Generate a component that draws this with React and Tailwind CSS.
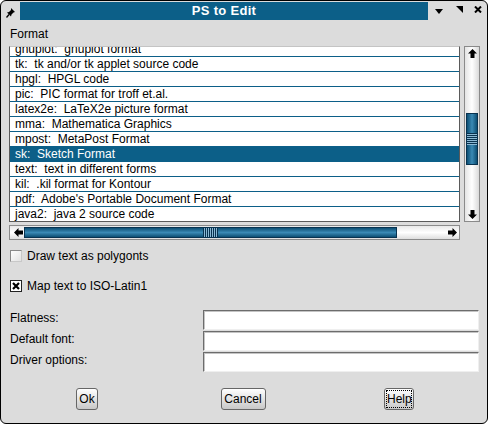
import React from 'react'

const ROWS = [
  'gnuplot:  gnuplot format',
  'tk:  tk and/or tk applet source code',
  'hpgl:  HPGL code',
  'pic:  PIC format for troff et.al.',
  'latex2e:  LaTeX2e picture format',
  'mma:  Mathematica Graphics',
  'mpost:  MetaPost Format',
  'sk:  Sketch Format',
  'text:  text in different forms',
  'kil:  .kil format for Kontour',
  "pdf:  Adobe's Portable Document Format",
  'java2:  java 2 source code',
]
const SELECTED = 7

// solid black scroll arrow, drawn pointing up and rotated
function Arrow({ rot = 0 }) {
  return (
    <svg width="9" height="9" viewBox="0 0 9 9" style={{ transform: `rotate(${rot}deg)` }}>
      <path d="M4.5 0 L9 4.5 L6.5 4.5 L6.5 9 L2.5 9 L2.5 4.5 L0 4.5 Z" fill="#000" />
    </svg>
  )
}

function Pin() {
  return (
    <svg width="10" height="11" viewBox="0 0 10 11">
      <path d="M5 1 L9 5 L7.5 5.5 L5.5 7.5 L5 9.5 L1 5.5 L3 5 L5 3 Z" fill="#000" />
      <path d="M3 7.5 L0.5 10.5" stroke="#000" strokeWidth="1.3" />
    </svg>
  )
}

function Checkbox({ checked, label }) {
  return (
    <div className="flex items-center h-[14px] pl-[9px]">
      {checked ? (
        <div className="w-[12px] h-[12px] border border-[#222] bg-white flex items-center justify-center">
          <svg width="8" height="8" viewBox="0 0 8 8">
            <path d="M1 1 L7 7 M7 1 L1 7" stroke="#000" strokeWidth="2.2" />
          </svg>
        </div>
      ) : (
        <div className="w-[12px] h-[12px] border border-[#8a8a8a] border-r-[#c8c8c8] border-b-[#c8c8c8] bg-linear-to-br from-white to-[#e2e2e2]" />
      )}
      <span className="ml-[5px] leading-[14px]">{label}</span>
    </div>
  )
}

function Field({ label }) {
  return (
    <div className="flex items-start h-[20px] pl-[9px]">
      <span className="w-[193px] leading-[14px] pt-[1px]">{label}</span>
      <div className="w-[276px] h-[20px] bg-white border border-t-[#6c6c6c] border-l-[#6c6c6c] border-r-[#efefef] border-b-[#efefef] shadow-[inset_1px_1px_0_#c4c4c4]" />
    </div>
  )
}

export default function App() {
  return (
    <div className="w-[488px] h-[424px] bg-white">
      <div className="w-[488px] h-[424px] bg-[#dcdcdc] border border-black rounded-[6px] overflow-hidden flex flex-col text-[12px] text-black font-['Liberation_Sans',Arial,sans-serif]">
        {/* title bar */}
        <div className="h-[20px] pt-[1px] flex">
          <div className="w-[19px] flex items-center justify-center pt-[1px]">
            <Pin />
          </div>
          <div className="w-[408px] h-[18px] bg-[#0c5f88] flex items-center justify-center text-white font-bold text-[13px] tracking-[0.3px]">
            PS to Edit
          </div>
          <div className="flex-1 flex items-center h-[18px]">
            <svg className="ml-[7px]" width="8" height="5" viewBox="0 0 8 5">
              <path d="M0 0 L8 0 L4 5 Z" fill="#000" />
            </svg>
            <svg className="ml-[13px] -mt-[3px]" width="7" height="7" viewBox="0 0 7 7">
              <path d="M0 0 L7 0 L7 7 Z" fill="#000" />
            </svg>
            <svg className="ml-[11px] -mt-[3px]" width="8" height="7" viewBox="0 0 8 7">
              <path d="M1 0.5 L7 6.5 M7 0.5 L1 6.5" stroke="#000" strokeWidth="2" />
            </svg>
          </div>
        </div>

        <div className="mt-[6px] pl-[9px] leading-[14px]">Format</div>

        {/* list + vertical scrollbar */}
        <div className="mt-[5px] ml-[8px] flex">
          <div className="w-[451px] h-[176px] bg-white border border-t-[#c4c4c4] border-l-[#5a5a5a] border-r-[#5a5a5a] border-b-[#5a5a5a] overflow-hidden">
            <div className="-mt-[5px]">
              {ROWS.map((r, i) => (
                <div
                  key={r}
                  className={
                    i === SELECTED
                      ? 'h-[15px] border-b border-[#0c5f88] bg-[#0c5f88] text-white pl-[5px] leading-[14px] whitespace-pre'
                      : 'h-[15px] border-b border-[#0c5f88] pl-[5px] leading-[14px] whitespace-pre'
                  }
                >
                  {r}
                </div>
              ))}
            </div>
          </div>
          <div className="ml-[4px] w-[16px] h-[176px] border border-[#8a8a8a] bg-linear-to-r from-[#e4e4e4] via-white to-[#dadada] flex flex-col items-center">
            <div className="mt-[2px]"><Arrow /></div>
            <div className="mt-[55px] w-[12px] h-[52px] border border-[#08324f] bg-linear-to-r from-[#0b4f74] via-[#3a8ab5] to-[#0b4f74] flex items-center">
              <div className="w-full h-[12px] bg-[repeating-linear-gradient(to_bottom,#08324f_0,#08324f_1px,#8ab8d4_1px,#8ab8d4_2px)]" />
            </div>
            <div className="mt-auto mb-[2px]"><Arrow rot={180} /></div>
          </div>
        </div>

        {/* horizontal scrollbar */}
        <div className="mt-[3px] ml-[8px] w-[451px] h-[15px] border border-[#8a8a8a] bg-linear-to-b from-[#e8e8e8] via-white to-[#dedede] flex items-center">
          <div className="ml-[4px]"><Arrow rot={-90} /></div>
          <div className="ml-[1px] w-[373px] h-[11px] border border-[#08324f] bg-linear-to-b from-[#0b4f74] via-[#3a8ab5] to-[#0b4f74] flex justify-center">
            <div className="w-[15px] h-full bg-[repeating-linear-gradient(to_right,#08324f_0,#08324f_1px,#8ab8d4_1px,#8ab8d4_2px)]" />
          </div>
          <div className="ml-auto mr-[2px]"><Arrow rot={90} /></div>
        </div>

        <div className="mt-[9px]">
          <Checkbox label="Draw text as polygonts" />
        </div>
        <div className="mt-[16px]">
          <Checkbox checked label="Map text to ISO-Latin1" />
        </div>

        <div className="mt-[17px] flex flex-col gap-[1px]">
          <Field label="Flatness:" />
          <Field label="Default font:" />
          <Field label="Driver options:" />
        </div>

        <div className="mt-[16px] ml-[8px] w-[468px] grid grid-cols-3">
          <div className="flex justify-center">
            <button className="w-[22px] h-[22px] rounded-[3px] border border-[#666] bg-linear-to-b from-white to-[#c8c8c8] shadow-[inset_0_1px_0_#fff] leading-[14px]">Ok</button>
          </div>
          <div className="flex justify-center">
            <button className="w-[45px] h-[22px] rounded-[3px] border border-[#666] bg-linear-to-b from-white to-[#c8c8c8] shadow-[inset_0_1px_0_#fff] leading-[14px]">Cancel</button>
          </div>
          <div className="flex justify-center">
            <button className="w-[30px] h-[22px] rounded-[3px] border border-[#666] bg-linear-to-b from-white to-[#c8c8c8] shadow-[inset_0_1px_0_#fff] p-[1px]">
              <span className="block h-full border border-dotted border-black leading-[16px]">Help</span>
            </button>
          </div>
        </div>
      </div>
    </div>
  )
}
